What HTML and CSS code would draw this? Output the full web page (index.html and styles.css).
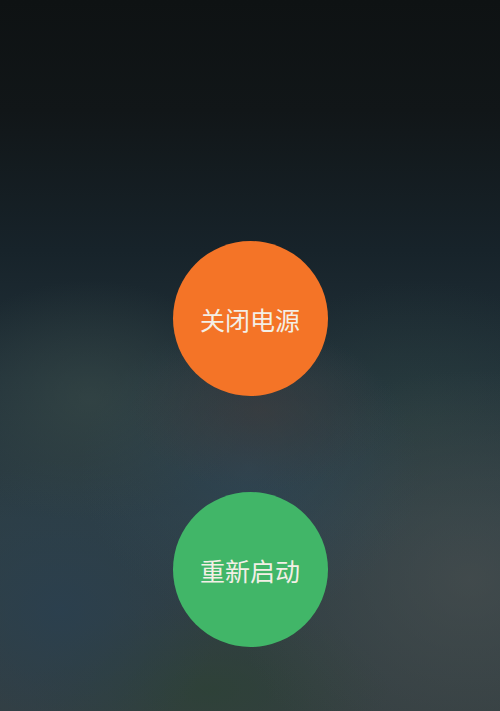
FILE: index.html
```html
<!DOCTYPE html>
<html lang="zh-CN">
<head>
<meta charset="utf-8">
<title>电源菜单</title>
<link rel="stylesheet" href="styles.css">
</head>
<body>
<main class="screen">
  <button class="power-btn off">关闭电源</button>
  <button class="power-btn restart">重新启动</button>
</main>
</body>
</html>
```
FILE: styles.css
```css
html, body {
  margin: 0;
  padding: 0;
  background: #101416;
}
.screen {
  width: 500px;
  height: 711px;
  box-sizing: border-box;
  padding-top: 241px;
  display: flex;
  flex-direction: column;
  align-items: center;
  gap: 96px;
  overflow: hidden;
  background:
    radial-gradient(ellipse 130px 80px at 260px 410px, rgba(66,60,58,0.55), rgba(66,60,58,0) 100%),
    radial-gradient(ellipse 160px 120px at 90px 400px, rgba(60,78,74,0.55), rgba(60,78,74,0) 100%),
    radial-gradient(ellipse 170px 150px at 250px 470px, rgba(50,74,90,0.6), rgba(50,74,90,0) 100%),
    radial-gradient(ellipse 240px 210px at 470px 580px, rgba(74,80,80,0.65), rgba(74,80,80,0) 100%),
    radial-gradient(ellipse 160px 150px at 60px 610px, rgba(42,64,80,0.8), rgba(42,64,80,0) 100%),
    radial-gradient(ellipse 180px 90px at 210px 690px, rgba(44,66,52,0.7), rgba(44,66,52,0) 100%),
    radial-gradient(ellipse 180px 140px at 420px 420px, rgba(44,66,64,0.5), rgba(44,66,64,0) 100%),
    linear-gradient(180deg, #0e1213 0px, #111618 110px, #17232a 250px, #22323a 380px, #2d3e45 520px, #343f42 711px);
}
.power-btn {
  width: 155px;
  height: 155px;
  border: 0;
  border-radius: 50%;
  padding: 0;
  margin: 0;
  display: flex;
  align-items: center;
  justify-content: center;
  font-family: "Noto Sans CJK SC", "Noto Sans", sans-serif;
  font-size: 25px;
  font-weight: 400;
  color: #f3efe6;
  letter-spacing: 0;
  flex: none;
}
.off {
  background: #f47427;
}
.restart {
  background: #41b668;
}
```
